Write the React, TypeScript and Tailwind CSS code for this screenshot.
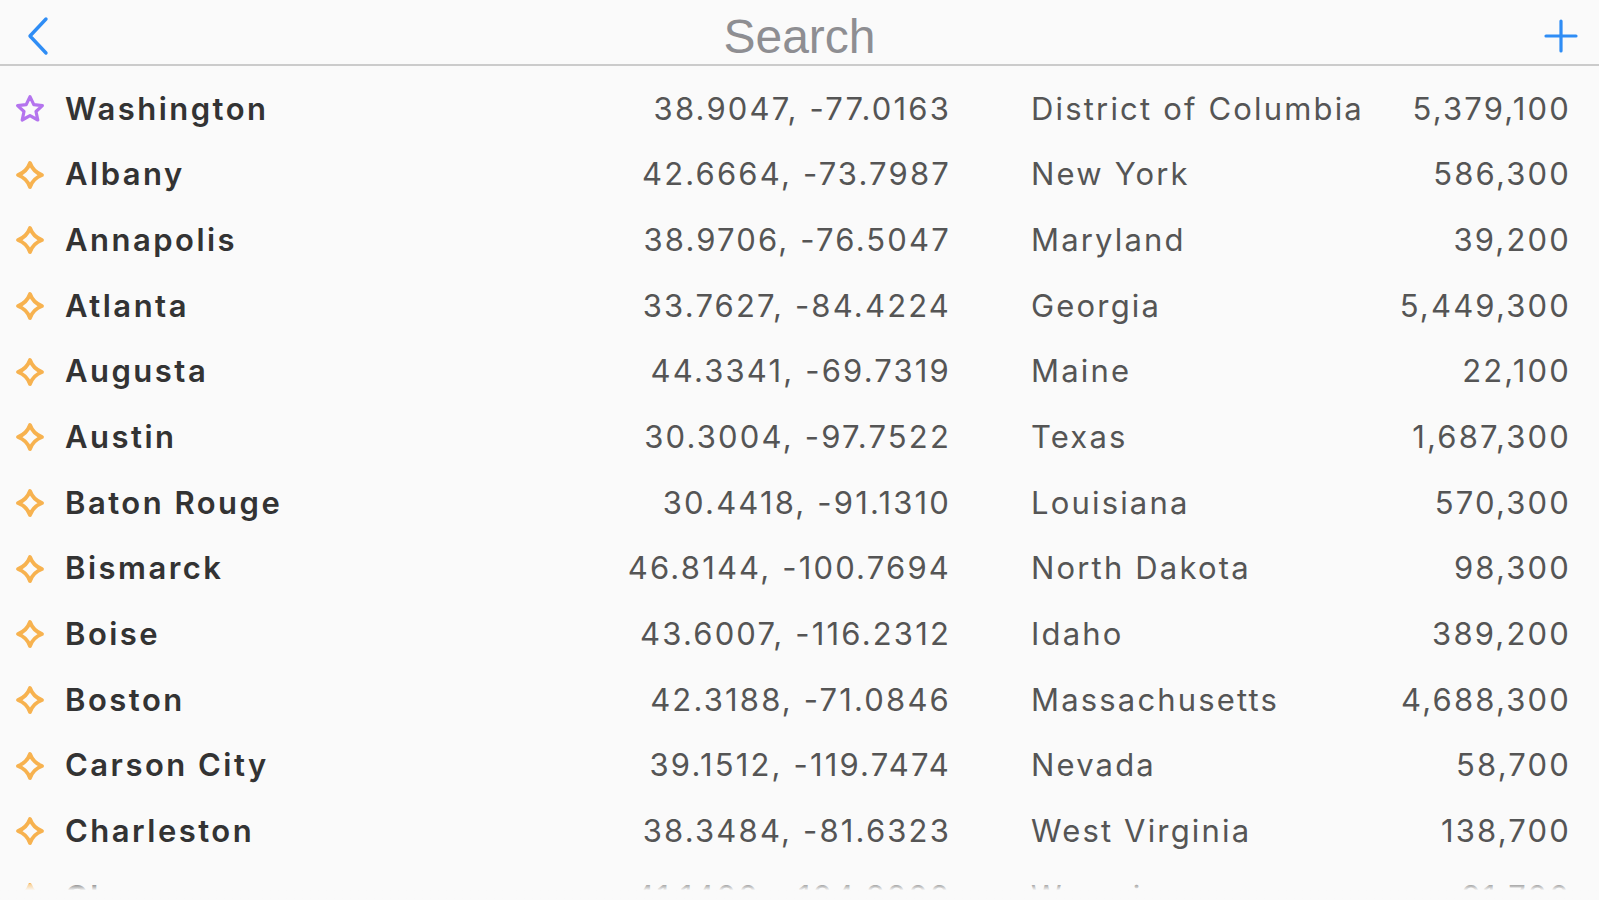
import React from "react";

type Row = { name: string; coord: string; state: string; pop: string; fav?: boolean };

const rows: Row[] = [
  { name: "Washington", coord: "38.9047, -77.0163", state: "District of Columbia", pop: "5,379,100", fav: true },
  { name: "Albany", coord: "42.6664, -73.7987", state: "New York", pop: "586,300" },
  { name: "Annapolis", coord: "38.9706, -76.5047", state: "Maryland", pop: "39,200" },
  { name: "Atlanta", coord: "33.7627, -84.4224", state: "Georgia", pop: "5,449,300" },
  { name: "Augusta", coord: "44.3341, -69.7319", state: "Maine", pop: "22,100" },
  { name: "Austin", coord: "30.3004, -97.7522", state: "Texas", pop: "1,687,300" },
  { name: "Baton Rouge", coord: "30.4418, -91.1310", state: "Louisiana", pop: "570,300" },
  { name: "Bismarck", coord: "46.8144, -100.7694", state: "North Dakota", pop: "98,300" },
  { name: "Boise", coord: "43.6007, -116.2312", state: "Idaho", pop: "389,200" },
  { name: "Boston", coord: "42.3188, -71.0846", state: "Massachusetts", pop: "4,688,300" },
  { name: "Carson City", coord: "39.1512, -119.7474", state: "Nevada", pop: "58,700" },
  { name: "Charleston", coord: "38.3484, -81.6323", state: "West Virginia", pop: "138,700" },
  { name: "Cheyenne", coord: "41.1400, -104.8202", state: "Wyoming", pop: "91,700" },
];

function Star() {
  return (
    <svg width="32" height="32" viewBox="0 0 32 32" fill="none">
      <path
        d="M16 3.6 L19.8 11.6 L28.4 12.6 L22 18.5 L23.8 27 L16 22.6 L8.2 27 L10 18.5 L3.6 12.6 L12.2 11.6 Z"
        stroke="#b474ee"
        strokeWidth="3.2"
        strokeLinejoin="round"
      />
    </svg>
  );
}

function Diamond() {
  return (
    <svg width="32" height="32" viewBox="0 0 32 32" fill="none">
      <path
        d="M16 4 Q19.2 12.8 28 16 Q19.2 19.2 16 28 Q12.8 19.2 4 16 Q12.8 12.8 16 4 Z"
        stroke="#f7b24f"
        strokeWidth="3.8"
        strokeLinejoin="round"
      />
    </svg>
  );
}

export default function App() {
  return (
    <div
      className="relative h-[900px] w-full overflow-hidden bg-[#fafafa]"
      style={{ fontFamily: "Inter, 'Liberation Sans', sans-serif" }}
    >
      <div className="relative flex h-[66px] items-center justify-between border-b-2 border-[#cbcbcb] px-[22px]">
        <svg width="30" height="40" viewBox="0 0 30 40" fill="none" className="mt-[8px]">
          <path d="M24 3 L8 20 L24 37" stroke="#2f8df5" strokeWidth="3.4" strokeLinecap="round" strokeLinejoin="round" />
        </svg>
        <div className="absolute left-0 right-0 top-0 flex h-[64px] items-center justify-center pt-[10px]">
          <span
            className="text-[48px] leading-none text-[#8e8e92]"
            style={{ fontFamily: "'Liberation Sans', Arial, sans-serif" }}
          >
            Search
          </span>
        </div>
        <svg width="36" height="36" viewBox="0 0 36 36" fill="none" className="mt-[8px] mr-[-2px]">
          <path d="M18 3 V33 M3 18 H33" stroke="#2f8df5" strokeWidth="3.2" strokeLinecap="round" />
        </svg>
      </div>
      <div className="pt-[10px]">
        {rows.map((r) => (
          <div
            key={r.name}
            className="flex h-[65.7px] items-center whitespace-nowrap pl-[14px] pr-[28px] text-[31px] tracking-[0.07em]"
          >
            <div className="flex w-[32px] shrink-0 justify-center">{r.fav ? <Star /> : <Diamond />}</div>
            <div className="ml-[19px] w-[520px] shrink-0 font-semibold tracking-[0.08em] text-[#333333]">{r.name}</div>
            <div className="w-[366px] shrink-0 text-right text-[#555555]">{r.coord}</div>
            <div className="ml-[80px] min-w-0 flex-1 text-[#555555]">{r.state}</div>
            <div className="w-[200px] shrink-0 text-right text-[#555555]">{r.pop}</div>
          </div>
        ))}
      </div>
      <div className="absolute bottom-0 left-0 right-0 h-[16px] bg-gradient-to-b from-[#fafafa]/40 to-[#fafafa] to-40%" />
    </div>
  );
}
